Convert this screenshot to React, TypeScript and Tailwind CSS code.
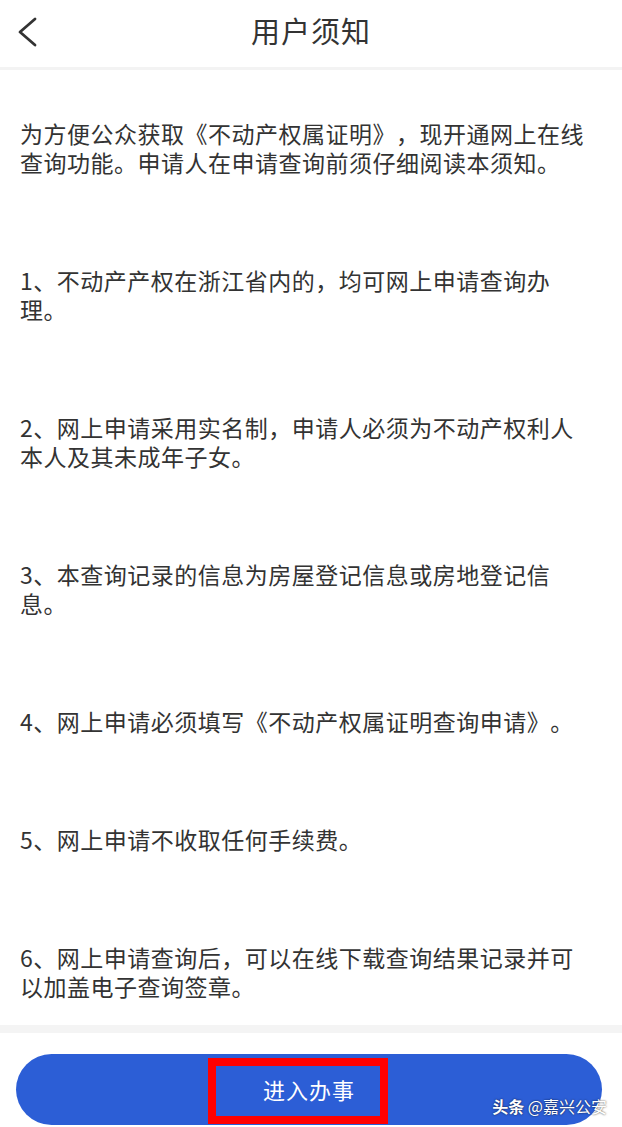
const FONT = "font-['Noto_Sans_CJK_SC','Noto_Sans',sans-serif]";

const NOTICE = [
  "为方便公众获取《不动产权属证明》，现开通网上在线查询功能。申请人在申请查询前须仔细阅读本须知。",
  "1、不动产产权在浙江省内的，均可网上申请查询办理。",
  "2、网上申请采用实名制，申请人必须为不动产权利人本人及其未成年子女。",
  "3、本查询记录的信息为房屋登记信息或房地登记信息。",
  "4、网上申请必须填写《不动产权属证明查询申请》。",
  "5、网上申请不收取任何手续费。",
  "6、网上申请查询后，可以在线下载查询结果记录并可以加盖电子查询签章。",
];

export default function App() {
  return (
    <div className={`relative flex flex-col h-[1127px] w-full overflow-hidden bg-white [text-spacing-trim:space-all] ${FONT}`}>
      {/* top bar */}
      <header className="relative flex h-[70px] shrink-0 items-center justify-center border-b-[3px] border-[#f3f3f3]">
        <button type="button" className="absolute left-[16px] top-[16px] flex h-[32px] w-[24px] items-center">
          <svg className="h-[32px] w-[24px]" viewBox="0 0 24 32" fill="none" stroke="#333" strokeWidth={2.8} strokeLinecap="round" strokeLinejoin="round">
            <path d="M19 3L4 16l15 13" />
          </svg>
        </button>
        <h1 className="-mt-[6px] text-[29px] leading-none tracking-[1px] text-[#333]">用户须知</h1>
      </header>

      {/* notice body */}
      <main className="flex flex-1 flex-col gap-[89px] pl-5 pr-8 pt-[49px]">
        {NOTICE.map((line) => (
          <p key={line} className="text-[23px] leading-[29px] tracking-[0.5px] text-[#333]">
            {line}
          </p>
        ))}
      </main>

      <div className="h-[8px] shrink-0 bg-[#f4f4f4]" />

      {/* action */}
      <div className="shrink-0 pb-[2px] pl-4 pr-[20px] pt-[21px]">
        <button
          type="button"
          className="relative flex h-[71px] w-full items-center justify-center rounded-full bg-[#2c5ed6] text-[22px] tracking-[1px] text-white"
        >
          <span className="-mt-[1px]">进入办事</span>
          <span className="pointer-events-none absolute left-[192px] top-[4px] h-[66px] w-[180px] border-[8px] border-[#ff0000]" />
        </button>
      </div>

      <div className="pointer-events-none absolute bottom-[13px] right-[15px] text-[16px] leading-none text-white [text-shadow:0_0_2px_rgba(0,0,0,0.8)]">
        <span className="font-bold">头条</span> @嘉兴公安
      </div>
    </div>
  );
}
